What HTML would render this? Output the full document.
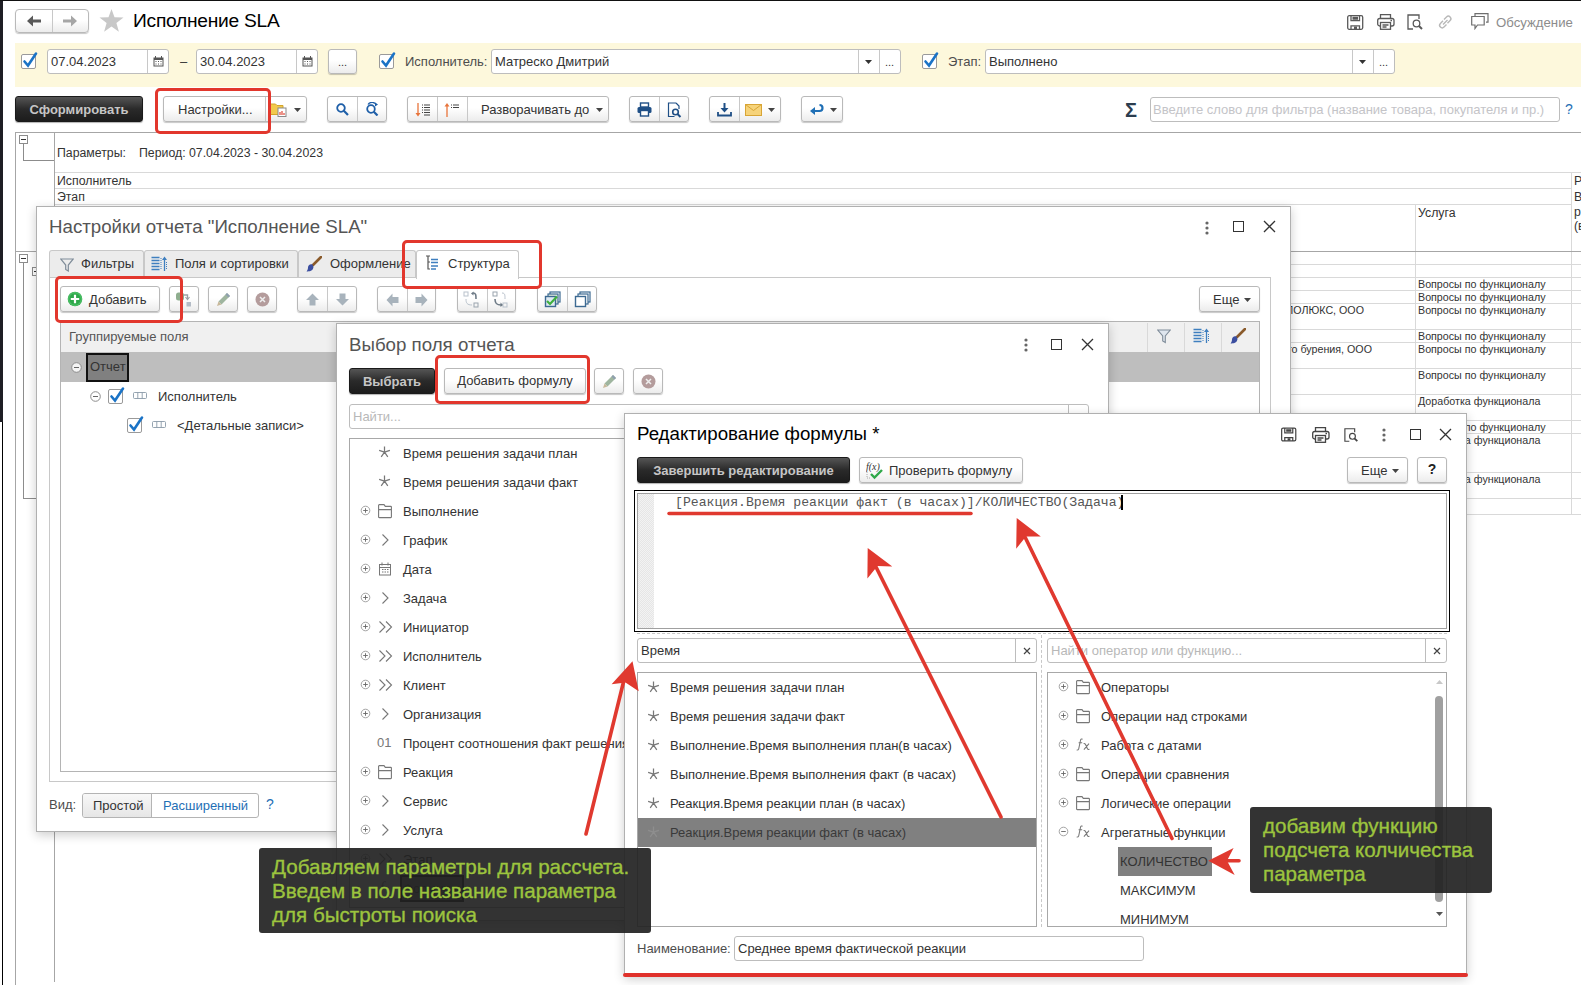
<!DOCTYPE html>
<html><head><meta charset="utf-8">
<style>
*{box-sizing:border-box;margin:0;padding:0}
html,body{width:1581px;height:985px;overflow:hidden;background:#fff;position:relative;font-family:"Liberation Sans",sans-serif;font-size:13px;color:#333}
.a{position:absolute}
.t{position:absolute;white-space:nowrap;line-height:16px;font-size:13px;color:#333}
.hl{position:absolute;height:1px;background:#d9d9d9}
.vl{position:absolute;width:1px;background:#d9d9d9}
.btn{position:absolute;border:1px solid #b9b9b9;border-radius:3px;background:linear-gradient(#fff,#fff 45%,#ececec);box-shadow:0 1px 1px rgba(0,0,0,.22);color:#333;white-space:nowrap;line-height:23px;text-align:center}
.dbtn{position:absolute;border:1px solid #1a1a1a;border-radius:3px;background:linear-gradient(#555,#2a2a2a 50%,#1c1c1c);color:#c6c6c6;font-weight:bold;white-space:nowrap;text-align:center;line-height:25px;box-shadow:0 1px 1px rgba(0,0,0,.3)}
.fld{position:absolute;border:1px solid #bdbdbd;border-radius:3px;background:#fff;white-space:nowrap;line-height:23px;padding-left:3px;color:#333}
.dv{position:absolute;top:0;bottom:0;width:1px;background:#c8c8c8}
.cb{position:absolute;width:15px;height:15px;border:1px solid #9a9a9a;border-radius:2px;background:#fff}
.cb svg{position:absolute;left:0;top:-4px}
.win{position:absolute;background:#fff;box-shadow:inset 0 0 0 1px #b0b0b0,0 3px 10px rgba(0,0,0,.2)}
.red{position:absolute;border:3px solid #e2372d;border-radius:5px}
.ico{position:absolute}
</style></head><body>
<!-- left dark strip -->
<div class="a" style="left:0;top:0;width:3px;height:422px;background:#1e1e24"></div>
<div class="a" style="left:2px;top:422px;width:1px;height:563px;background:#000"></div>
<div class="a" style="left:0;top:0;width:1581px;height:1px;background:#111"></div>

<!-- HEADER -->
<div class="btn" style="left:15px;top:9px;width:74px;height:24px;border-radius:4px"><div class="dv" style="left:36px"></div>
 <svg class="ico" style="left:11px;top:5px" width="14" height="12" viewBox="0 0 14 12"><path d="M0 6 L6 0.5 V4.5 H14 V7.5 H6 V11.5 Z" fill="#595959"/></svg>
 <svg class="ico" style="left:47px;top:5px" width="14" height="12" viewBox="0 0 14 12"><path d="M14 6 L8 0.5 V4.5 H0 V7.5 H8 V11.5 Z" fill="#a6a6a6"/></svg>
</div>
<svg class="ico" style="left:99px;top:9px" width="25" height="23" viewBox="0 0 24 23"><path d="M12 0 L15 8.3 L24 8.6 L16.9 14 L19.4 22.7 L12 17.6 L4.6 22.7 L7.1 14 L0 8.6 L9 8.3 Z" fill="#c8c8c8"/></svg>
<div class="t" style="left:133px;top:10px;font-size:19.2px;line-height:22px;color:#000;letter-spacing:-0.25px">Исполнение SLA</div>

<!-- header right icons -->
<svg class="ico" style="left:1347px;top:15px" width="17" height="15" viewBox="0 0 17 15" fill="none" stroke="#595959" stroke-width="1.3"><rect x="0.7" y="0.7" width="15" height="13.6" rx="1.5"/><path d="M4 0.7v5h8.5v-5M5.5 2.5h5.5M5.5 4h5.5M4 14.3v-3.5h8.5v3.5"/><rect x="7" y="11.5" width="3" height="2.5" fill="#595959" stroke="none"/></svg>
<svg class="ico" style="left:1377px;top:14px" width="18" height="16" viewBox="0 0 18 16" fill="none" stroke="#595959" stroke-width="1.3"><path d="M3.5 4.5V0.7h10v3.8"/><rect x="0.7" y="4.5" width="16.3" height="7.5" rx="2"/><rect x="3.5" y="8.5" width="10" height="6.8" fill="#fff"/><path d="M5.5 11h6M5.5 13h4M13.5 6.5h1.5"/></svg>
<svg class="ico" style="left:1407px;top:14px" width="18" height="16" viewBox="0 0 18 16" fill="none" stroke="#595959" stroke-width="1.3"><path d="M6 15H1V1h11v4"/><circle cx="9.5" cy="9.5" r="3.3"/><path d="M12 12l3 3" stroke-width="2"/></svg>
<svg class="ico" style="left:1437px;top:14px" width="17" height="16" viewBox="0 0 17 16" fill="none" stroke="#b8b8b8" stroke-width="1.4"><path d="M7 5.5l2.5-2.5a2.5 2.5 0 0 1 3.6 3.6L10.5 9.2M9.5 10.5L7 13a2.5 2.5 0 0 1-3.6-3.6L6 6.8M6 10.5l4.5-4.5"/></svg>
<svg class="ico" style="left:1471px;top:13px" width="18" height="17" viewBox="0 0 18 17" fill="none" stroke="#6e6e6e" stroke-width="1.2"><path d="M4 3V0.7h13v8.5h-2"/><path d="M0.7 3.5h12.5v8.5H6.5L4 15.5V12H0.7Z" fill="#fff"/></svg>
<div class="t" style="left:1496px;top:15px;color:#8c8c8c;font-size:13.2px">Обсуждение</div>

<!-- FILTER BAR -->
<div class="a" style="left:15px;top:43px;width:1566px;height:44px;background:#fdf8dc"></div>
<div class="cb" style="left:21px;top:54px"><svg width="16" height="18" viewBox="0 0 16 18"><path d="M2.5 10.5 L6 14.5 L14 2.5" fill="none" stroke="#1a73c6" stroke-width="2.6" stroke-linecap="round"/></svg></div>
<div class="fld" style="left:47px;top:49px;width:122px;height:25px">07.04.2023<div class="dv" style="left:99px;background:#c8c8c8"></div>
 <svg class="ico" style="left:105px;top:6px" width="11" height="11" viewBox="0 0 11 11"><rect x="0.5" y="1.5" width="10" height="9" fill="#555"/><rect x="1.5" y="4" width="8" height="5.5" fill="#fff"/><path d="M2.5 5h1v1h-1zM5 5h1v1H5zM7.5 5h1v1h-1zM2.5 7.5h1v1h-1zM5 7.5h1v1H5zM7.5 7.5h1v1h-1z" fill="#555"/><path d="M2.5 0v2M8.5 0v2" stroke="#555"/></svg>
</div>
<div class="t" style="left:180px;top:54px">–</div>
<div class="fld" style="left:196px;top:49px;width:122px;height:25px">30.04.2023<div class="dv" style="left:99px;background:#c8c8c8"></div>
 <svg class="ico" style="left:105px;top:6px" width="11" height="11" viewBox="0 0 11 11"><rect x="0.5" y="1.5" width="10" height="9" fill="#555"/><rect x="1.5" y="4" width="8" height="5.5" fill="#fff"/><path d="M2.5 5h1v1h-1zM5 5h1v1H5zM7.5 5h1v1h-1zM2.5 7.5h1v1h-1zM5 7.5h1v1H5zM7.5 7.5h1v1h-1z" fill="#555"/><path d="M2.5 0v2M8.5 0v2" stroke="#555"/></svg>
</div>
<div class="btn" style="left:328px;top:49px;width:29px;height:25px;line-height:24px;font-size:11px">...</div>

<div class="cb" style="left:379px;top:54px"><svg width="16" height="18" viewBox="0 0 16 18"><path d="M2.5 10.5 L6 14.5 L14 2.5" fill="none" stroke="#1a73c6" stroke-width="2.6" stroke-linecap="round"/></svg></div>
<div class="t" style="left:405px;top:54px;color:#4d4d4d">Исполнитель:</div>
<div class="fld" style="left:491px;top:49px;width:410px;height:25px">Матреско Дмитрий<div class="dv" style="left:366px"></div><div class="dv" style="left:387px"></div>
 <svg class="ico" style="left:373px;top:10px" width="7" height="4"><path d="M0 0h7L3.5 4z" fill="#333"/></svg>
 <div class="a" style="left:393px;top:0;font-size:11px;line-height:24px">...</div>
</div>
<div class="cb" style="left:922px;top:54px"><svg width="16" height="18" viewBox="0 0 16 18"><path d="M2.5 10.5 L6 14.5 L14 2.5" fill="none" stroke="#1a73c6" stroke-width="2.6" stroke-linecap="round"/></svg></div>
<div class="t" style="left:948px;top:54px;color:#4d4d4d">Этап:</div>
<div class="fld" style="left:985px;top:49px;width:410px;height:25px">Выполнено<div class="dv" style="left:366px"></div><div class="dv" style="left:387px"></div>
 <svg class="ico" style="left:373px;top:10px" width="7" height="4"><path d="M0 0h7L3.5 4z" fill="#333"/></svg>
 <div class="a" style="left:393px;top:0;font-size:11px;line-height:24px">...</div>
</div>

<!-- TOOLBAR -->
<div class="dbtn" style="left:15px;top:96px;width:128px;height:26px">Сформировать</div>
<div class="btn" style="left:163px;top:96px;width:144px;height:26px;text-align:left"><span class="a" style="left:14px;top:1px">Настройки...</span><div class="dv" style="left:101px"></div>
 <svg class="ico" style="left:106px;top:5px" width="18" height="15" viewBox="0 0 18 15"><path d="M0.5 2h5l1.5 1.5h6v9H0.5z" fill="#f2c94c" stroke="#d4a52a"/><rect x="8" y="6" width="8" height="8.5" fill="#fff" stroke="#8a8a8a"/><path d="M10 13V10M12 13V9M14 13v-2" stroke="#e04a3a" stroke-width="1.2"/></svg>
 <svg class="ico" style="left:130px;top:11px" width="7" height="4"><path d="M0 0h7L3.5 4z" fill="#444"/></svg>
</div>
<div class="btn" style="left:327px;top:96px;width:60px;height:26px"><div class="dv" style="left:29px"></div>
 <svg class="ico" style="left:8px;top:6px" width="13" height="13" viewBox="0 0 13 13"><circle cx="5" cy="5" r="3.8" fill="none" stroke="#1f5fa8" stroke-width="1.8"/><path d="M7.8 7.8L12 12" stroke="#1f5fa8" stroke-width="2.2"/></svg>
 <svg class="ico" style="left:37px;top:5px" width="15" height="14" viewBox="0 0 15 14"><circle cx="6" cy="7" r="3.8" fill="none" stroke="#1f5fa8" stroke-width="1.8"/><path d="M8.8 9.8L12.5 13.5" stroke="#1f5fa8" stroke-width="2.2"/><path d="M3 2.5A5 5 0 0 1 11.5 3" fill="none" stroke="#1f5fa8" stroke-width="1.3"/><path d="M10 0.5l3 2-3 2z" fill="#1f5fa8"/></svg>
</div>
<div class="btn" style="left:407px;top:96px;width:202px;height:26px;text-align:left"><div class="dv" style="left:29px"></div><div class="dv" style="left:59px"></div>
 <svg class="ico" style="left:7px;top:5px" width="16" height="16" viewBox="0 0 16 16"><path d="M3 1v12" stroke="#e8743b" stroke-width="1.3"/><path d="M0.5 11l2.5 3.5 2.5-3.5z" fill="#e8743b"/><path d="M7 3h1M9 3h6M7 5.5h1M9 5.5h6M7 8h1M9 8h6M7 10.5h1M9 10.5h6M9 13h6" stroke="#444" stroke-width="1.1"/></svg>
 <svg class="ico" style="left:36px;top:5px" width="16" height="16" viewBox="0 0 16 16"><path d="M3 3v12" stroke="#e8743b" stroke-width="1.3"/><path d="M0.5 4.5L3 1l2.5 3.5z" fill="#e8743b"/><path d="M7 3h1M9 3h6M7 5.5h1M9 5.5h6" stroke="#444" stroke-width="1.1"/></svg>
 <span class="a" style="left:73px;top:1px">Разворачивать до</span>
 <svg class="ico" style="left:188px;top:11px" width="7" height="4"><path d="M0 0h7L3.5 4z" fill="#444"/></svg>
</div>
<div class="btn" style="left:629px;top:96px;width:60px;height:26px"><div class="dv" style="left:29px"></div>
 <svg class="ico" style="left:7px;top:5px" width="15" height="15" viewBox="0 0 15 15"><rect x="3.5" y="1" width="8" height="4" fill="none" stroke="#1f4f86" stroke-width="1.4"/><rect x="0.5" y="5" width="14" height="6" rx="1.5" fill="#1f4f86"/><rect x="3.5" y="8.5" width="8" height="5.5" fill="#fff" stroke="#1f4f86" stroke-width="1.4"/></svg>
 <svg class="ico" style="left:37px;top:5px" width="15" height="16" viewBox="0 0 15 16"><path d="M9 1H1.5v13.5h6M9 1l3 3v3" fill="none" stroke="#1f4f86" stroke-width="1.2"/><circle cx="8.5" cy="10" r="2.8" fill="none" stroke="#1f4f86" stroke-width="1.6"/><path d="M10.5 12l3 3" stroke="#1f4f86" stroke-width="2"/></svg>
</div>
<div class="btn" style="left:709px;top:96px;width:72px;height:26px"><div class="dv" style="left:29px"></div>
 <svg class="ico" style="left:7px;top:5px" width="15" height="15" viewBox="0 0 15 15"><path d="M7.5 1v8" stroke="#1f4f86" stroke-width="2"/><path d="M3.5 6l4 4.5 4-4.5z" fill="#1f4f86"/><path d="M1 10v3.5h13V10" fill="none" stroke="#1f4f86" stroke-width="1.8"/></svg>
 <svg class="ico" style="left:35px;top:7px" width="17" height="12" viewBox="0 0 17 12"><rect x="0.5" y="0.5" width="16" height="11" fill="#f6d37a" stroke="#d8a536"/><path d="M0.5 0.5l8 6 8-6" fill="none" stroke="#d8a536"/></svg>
 <svg class="ico" style="left:58px;top:11px" width="7" height="4"><path d="M0 0h7L3.5 4z" fill="#444"/></svg>
</div>
<div class="btn" style="left:801px;top:96px;width:42px;height:26px">
 <svg class="ico" style="left:8px;top:6px" width="14" height="12" viewBox="0 0 14 12"><path d="M4.5 5h5a3 3 0 0 0 0-6" fill="none" stroke="#1f6fb5" stroke-width="2.2" transform="translate(0,3)"/><path d="M0 8l5-4v8z" fill="#1f6fb5"/></svg>
 <svg class="ico" style="left:28px;top:11px" width="7" height="4"><path d="M0 0h7L3.5 4z" fill="#444"/></svg>
</div>
<div class="t" style="left:1125px;top:99px;font-size:20px;line-height:22px;color:#2b3d4f;font-weight:bold">Σ</div>
<div class="fld" style="left:1150px;top:97px;width:410px;height:25px;color:#c4c4c8;padding-left:2px;line-height:23px">Введите слово для фильтра (название товара, покупателя и пр.)</div>
<div class="t" style="left:1565px;top:101px;color:#1f6fb5;font-size:14px">?</div>

<!--REPORT-->
<!-- REPORT BACKGROUND -->
<div class="a" style="left:15px;top:132px;width:1566px;height:1px;background:#a6a6a6"></div>
<div class="a" style="left:15px;top:132px;width:1px;height:853px;background:#a6a6a6"></div>
<div class="a" style="left:54px;top:133px;width:1px;height:849px;background:#a6a6a6"></div>
<div class="a" style="left:19px;top:135px;width:9px;height:9px;border:1px solid #8c8c8c;background:#fff"><div class="a" style="left:1px;top:3px;width:5px;height:1px;background:#333"></div></div>
<div class="a" style="left:23px;top:144px;width:1px;height:16px;background:#8c8c8c"></div>
<div class="a" style="left:23px;top:160px;width:31px;height:1px;background:#8c8c8c"></div>
<div class="a" style="left:15px;top:251px;width:21px;height:1px;background:#8c8c8c"></div>
<div class="a" style="left:19px;top:254px;width:9px;height:9px;border:1px solid #8c8c8c;background:#fff"><div class="a" style="left:1px;top:3px;width:5px;height:1px;background:#333"></div></div>
<div class="a" style="left:23px;top:263px;width:1px;height:236px;background:#8c8c8c"></div>
<div class="a" style="left:23px;top:498px;width:13px;height:1px;background:#8c8c8c"></div>
<div class="a" style="left:32px;top:267px;width:9px;height:9px;border:1px solid #8c8c8c;background:#fff"><div class="a" style="left:1px;top:3px;width:5px;height:1px;background:#333"></div></div>
<div class="t" style="left:57px;top:145px;font-size:12.3px">Параметры:</div>
<div class="t" style="left:139px;top:145px;font-size:12.3px">Период: 07.04.2023 - 30.04.2023</div>
<div class="hl" style="left:55px;top:172px;width:1526px"></div>
<div class="t" style="left:57px;top:173px;font-size:12.3px">Исполнитель</div>
<div class="hl" style="left:55px;top:188px;width:1516px"></div>
<div class="t" style="left:57px;top:189px;font-size:12.3px">Этап</div>
<div class="hl" style="left:55px;top:204px;width:1516px"></div>
<div class="vl" style="left:1571px;top:172px;height:343px"></div>
<div class="vl" style="left:1415px;top:204px;height:311px"></div>
<div class="t" style="left:1418px;top:205px;font-size:12.3px">Услуга</div>
<div class="t" style="left:1574px;top:173px;font-size:12.3px">Р</div>
<div class="t" style="left:1574px;top:189px;font-size:12.3px">В</div>
<div class="t" style="left:1574px;top:204px;font-size:12.3px">р</div>
<div class="t" style="left:1574px;top:218px;font-size:12.3px">(в</div>
<div class="a" style="left:15px;top:251px;width:1566px;height:1px;background:#a6a6a6"></div>
<div class="hl" style="left:1290px;top:264px;width:291px"></div>
<div class="hl" style="left:1290px;top:277px;width:291px"></div>
<div class="hl" style="left:1290px;top:290px;width:291px"></div>
<div class="hl" style="left:1290px;top:303px;width:291px"></div>
<div class="hl" style="left:1290px;top:329px;width:291px"></div>
<div class="hl" style="left:1290px;top:342px;width:291px"></div>
<div class="hl" style="left:1290px;top:368px;width:291px"></div>
<div class="hl" style="left:1290px;top:394px;width:291px"></div>
<div class="hl" style="left:1290px;top:420px;width:291px"></div>
<div class="hl" style="left:1290px;top:433px;width:291px"></div>
<div class="hl" style="left:1290px;top:472px;width:291px"></div>
<div class="hl" style="left:1290px;top:498px;width:291px"></div>
<div class="hl" style="left:1290px;top:514px;width:291px"></div>
<div class="t" style="left:1418px;top:277px;font-size:10.7px;line-height:14px">Вопросы по функционалу</div>
<div class="t" style="left:1418px;top:290px;font-size:10.7px;line-height:14px">Вопросы по функционалу</div>
<div class="t" style="left:1418px;top:303px;font-size:10.7px;line-height:14px">Вопросы по функционалу</div>
<div class="t" style="right:217px;top:303px;font-size:10.7px;line-height:14px">АПОЛЮКС, ООО</div>
<div class="t" style="left:1418px;top:329px;font-size:10.7px;line-height:14px">Вопросы по функционалу</div>
<div class="t" style="left:1418px;top:342px;font-size:10.7px;line-height:14px">Вопросы по функционалу</div>
<div class="t" style="right:209px;top:342px;font-size:10.7px;line-height:14px">ного бурения, ООО</div>
<div class="t" style="left:1418px;top:368px;font-size:10.7px;line-height:14px">Вопросы по функционалу</div>
<div class="t" style="left:1418px;top:394px;font-size:10.7px;line-height:14px">Доработка функционала</div>
<div class="t" style="left:1418px;top:420px;font-size:10.7px;line-height:14px">Вопросы по функционалу</div>
<div class="t" style="left:1418px;top:433px;font-size:10.7px;line-height:14px">Доработка функционала</div>
<div class="t" style="left:1418px;top:472px;font-size:10.7px;line-height:14px">Доработка функционала</div>

<!-- SETTINGS DIALOG -->
<div class="win" style="left:36px;top:206px;width:1255px;height:626px">
 <div class="t" style="left:13px;top:10px;font-size:18.7px;line-height:22px;color:#555">Настройки отчета "Исполнение SLA"</div>
 <svg class="ico" style="left:1169px;top:15px" width="4" height="14"><circle cx="2" cy="2" r="1.6" fill="#666"/><circle cx="2" cy="7" r="1.6" fill="#666"/><circle cx="2" cy="12" r="1.6" fill="#666"/></svg>
 <div class="a" style="left:1197px;top:15px;width:11px;height:11px;border:1.3px solid #333"></div>
 <svg class="ico" style="left:1227px;top:14px" width="13" height="13"><path d="M1 1L12 12M12 1L1 12" stroke="#333" stroke-width="1.3"/></svg>
 <!-- tabs: dialog origin (36,206) -->
 <div class="a" style="left:13px;top:44px;width:95px;height:28px;background:#ececec;border:1px solid #c8c8c8;border-bottom:none;border-radius:3px 3px 0 0"></div>
 <svg class="ico" style="left:24px;top:52px" width="14" height="14" viewBox="0 0 14 14"><path d="M0.7 1h12.6L8.3 7v6L5.7 11.5V7z" fill="none" stroke="#7f8c99" stroke-width="1.2"/></svg>
 <div class="t" style="left:45px;top:50px;color:#333">Фильтры</div>
 <div class="a" style="left:108px;top:44px;width:154px;height:28px;background:#ececec;border:1px solid #c8c8c8;border-bottom:none;border-radius:3px 3px 0 0"></div>
 <svg class="ico" style="left:115px;top:50px" width="17" height="16" viewBox="0 0 17 16"><path d="M0.5 1.5h8M0.5 4.5h8M0.5 7.5h8M0.5 10.5h8M0.5 13.5h8" stroke="#3f7fbf" stroke-width="1.6"/><path d="M13.5 15V2" stroke="#3f7fbf" stroke-width="1.3"/><path d="M11 4l2.5-3.5L16 4z" fill="#3f7fbf"/><path d="M10 2v12" stroke="#3f7fbf" stroke-width="1" stroke-dasharray="1 1"/><path d="M15.5 6v8" stroke="#3f7fbf" stroke-width="1" stroke-dasharray="1 1"/></svg>
 <div class="t" style="left:139px;top:50px;color:#333">Поля и сортировки</div>
 <div class="a" style="left:262px;top:44px;width:118px;height:28px;background:#ececec;border:1px solid #c8c8c8;border-bottom:none;border-radius:3px 3px 0 0"></div>
 <svg class="ico" style="left:270px;top:50px" width="16" height="16" viewBox="0 0 16 16"><path d="M15 1L7 9" stroke="#8a5a2b" stroke-width="2.6" stroke-linecap="round"/><path d="M6.5 8.5c-2.5-1-4.5 1-4.5 3S1 15 0.5 15.5c3 0 6.5-0.5 7-4.5z" fill="#3b4ea0"/></svg>
 <div class="t" style="left:294px;top:50px;color:#333">Оформление</div>
 <div class="a" style="left:380px;top:44px;width:103px;height:29px;background:#fff;border:1px solid #c8c8c8;border-bottom:none;border-radius:3px 3px 0 0"></div>
 <svg class="ico" style="left:389px;top:49px" width="14" height="16" viewBox="0 0 14 16"><path d="M1 1h4M3 1v13h2M3 7h2" fill="none" stroke="#555" stroke-width="1.2"/><path d="M6 4.5h7M6 7.5h7M6 11h7M6 14h5" stroke="#3f7fbf" stroke-width="1.6"/></svg>
 <div class="t" style="left:412px;top:50px;color:#333">Структура</div>
 <!-- tab panel -->
 <div class="a" style="left:13px;top:71px;width:1222px;height:505px;border:1px solid #c8c8c8;border-top:none"></div>
 <div class="a" style="left:13px;top:71px;width:367px;height:1px;background:#c8c8c8"></div>
 <div class="a" style="left:483px;top:71px;width:752px;height:1px;background:#c8c8c8"></div>
 <!-- toolbar y 286-312 => 80-106 -->
 <div class="btn" style="left:24px;top:80px;width:100px;height:26px;text-align:left;line-height:23px">
  <svg class="ico" style="left:6px;top:4px" width="16" height="16" viewBox="0 0 16 16"><circle cx="8" cy="8" r="7.3" fill="#2ea84a"/><circle cx="8" cy="8" r="6.3" fill="none" stroke="#5fd07a" stroke-width="0.8"/><path d="M8 3.8v8.4M3.8 8h8.4" stroke="#fff" stroke-width="2.2"/></svg>
  <span class="a" style="left:28px;top:1px">Добавить</span></div>
 <div class="btn" style="left:133px;top:80px;width:30px;height:26px">
  <svg class="ico" style="left:5px;top:4px" width="18" height="18" viewBox="0 0 18 18"><rect x="1" y="1.5" width="8" height="8" rx="2.5" fill="#8fae8f"/><path d="M9 4h3.5v4" fill="none" stroke="#9aa0a6" stroke-width="1.4"/><path d="M10.5 6l2 2.5 2-2.5" fill="none" stroke="#9aa0a6" stroke-width="1.2"/><rect x="11.5" y="11" width="4.5" height="4.5" fill="#b4bcc6"/></svg></div>
 <div class="btn" style="left:172px;top:80px;width:30px;height:26px">
  <svg class="ico" style="left:7px;top:5px" width="15" height="15" viewBox="0 0 15 15"><path d="M11 1l3 3-8.5 8.5-3-3z" fill="#9fb59f"/><path d="M11 1l3 3-1.5 1.5-3-3z" fill="#8f9fb0"/><path d="M2.5 9.5l3 3L1 14z" fill="#c8b89a"/></svg></div>
 <div class="btn" style="left:211px;top:80px;width:30px;height:26px">
  <svg class="ico" style="left:7px;top:5px" width="15" height="15" viewBox="0 0 15 15"><circle cx="7.5" cy="7.5" r="7" fill="#b49c9c"/><path d="M5 5l5 5M10 5l-5 5" stroke="#eee" stroke-width="1.5"/></svg></div>
 <div class="btn" style="left:261px;top:80px;width:60px;height:26px"><div class="dv" style="left:29px"></div>
  <svg class="ico" style="left:7px;top:6px" width="15" height="13" viewBox="0 0 15 13"><path d="M7.5 0.5L14 7h-3.5v5.5h-6V7H1z" fill="#a8b3bc"/></svg>
  <svg class="ico" style="left:37px;top:6px" width="15" height="13" viewBox="0 0 15 13"><path d="M7.5 12.5L14 6h-3.5V0.5h-6V6H1z" fill="#a8b3bc"/></svg></div>
 <div class="btn" style="left:341px;top:80px;width:59px;height:26px"><div class="dv" style="left:29px"></div>
  <svg class="ico" style="left:8px;top:6px" width="13" height="14" viewBox="0 0 13 14"><path d="M0.5 7L6.5 0.5V4H12.5V10H6.5V13.5z" fill="#a8b3bc"/></svg>
  <svg class="ico" style="left:37px;top:6px" width="13" height="14" viewBox="0 0 13 14"><path d="M12.5 7L6.5 0.5V4H0.5V10H6.5V13.5z" fill="#a8b3bc"/></svg></div>
 <div class="btn" style="left:421px;top:80px;width:59px;height:26px"><div class="dv" style="left:29px"></div>
  <svg class="ico" style="left:5px;top:4px" width="18" height="18" viewBox="0 0 18 18" fill="none" stroke="#b9c2cc" stroke-width="1"><rect x="1" y="1" width="4" height="4"/><rect x="11" y="12" width="4" height="4" stroke="#9aa4ae"/><path d="M10 2c3 0 3 2 3 6" stroke="#6d7a86" stroke-width="1.6"/><path d="M8 2.5l2.5-2v4z" fill="#6d7a86" stroke="none"/><path d="M3 8c0 4 1 6 6 6"/></svg>
  <svg class="ico" style="left:34px;top:4px" width="18" height="18" viewBox="0 0 18 18" fill="none" stroke="#b9c2cc" stroke-width="1"><rect x="1" y="1" width="4" height="4" stroke="#9aa4ae"/><rect x="11" y="12" width="4" height="4"/><path d="M10 2c3 0 3 2 3 6"/><path d="M3 8c0 4 1 6 6 6" stroke="#6d7a86" stroke-width="1.6"/><path d="M8.5 11.5l2.5 2.5-2.5 2z" fill="#6d7a86" stroke="none"/></svg></div>
 <div class="btn" style="left:501px;top:80px;width:60px;height:26px"><div class="dv" style="left:29px"></div>
  <svg class="ico" style="left:6px;top:4px" width="18" height="18" viewBox="0 0 18 18"><rect x="6" y="1" width="10" height="10" fill="#fff" stroke="#3d6a92" stroke-width="1.2"/><rect x="4" y="3" width="10" height="10" fill="#e8f0e0" stroke="#3d6a92" stroke-width="1.2"/><rect x="1.5" y="5.5" width="10" height="10" fill="#dfeaf2" stroke="#3d6a92" stroke-width="1.4"/><path d="M3 10l3 3 7-7.5" fill="none" stroke="#3fb03f" stroke-width="2.2"/></svg>
  <svg class="ico" style="left:36px;top:4px" width="18" height="18" viewBox="0 0 18 18" fill="#fff" stroke="#3d6a92" stroke-width="1.2"><rect x="6" y="1" width="10" height="10"/><rect x="4" y="3" width="10" height="10"/><rect x="1.5" y="5.5" width="10" height="10" stroke-width="1.4"/></svg></div>
 <div class="btn" style="left:1163px;top:80px;width:61px;height:26px;text-align:left"><span class="a" style="left:13px;top:1px">Еще</span><svg class="ico" style="left:44px;top:11px" width="7" height="4"><path d="M0 0h7L3.5 4z" fill="#444"/></svg></div>
 <!-- table x60-1260 y322-772 => 24..1224, 116..566 -->
 <div class="a" style="left:24px;top:115px;width:1200px;height:451px;border:1px solid #b4b4b4;background:#fff"></div>
 <div class="a" style="left:25px;top:116px;width:1198px;height:30px;background:#f0f0f0"></div>
 <div class="vl" style="left:848px;top:117px;height:29px"></div>
 <div class="vl" style="left:1111px;top:117px;height:29px"></div>
 <div class="vl" style="left:1148px;top:117px;height:29px"></div>
 <div class="vl" style="left:1185px;top:117px;height:29px"></div>
 <svg class="ico" style="left:1121px;top:123px" width="14" height="15" viewBox="0 0 14 15"><path d="M0.7 1h12.6L8.3 7v6.5L5.7 12V7z" fill="#dfe6ee" stroke="#7f8c99" stroke-width="1.1"/></svg>
 <svg class="ico" style="left:1157px;top:122px" width="17" height="16" viewBox="0 0 17 16"><path d="M0.5 1.5h8M0.5 4.5h8M0.5 7.5h8M0.5 10.5h8M0.5 13.5h8" stroke="#3f7fbf" stroke-width="1.6"/><path d="M13.5 15V2" stroke="#3f7fbf" stroke-width="1.3"/><path d="M11 4l2.5-3.5L16 4z" fill="#3f7fbf"/><path d="M10 2v12" stroke="#3f7fbf" stroke-width="1" stroke-dasharray="1 1"/><path d="M15.5 6v8" stroke="#3f7fbf" stroke-width="1" stroke-dasharray="1 1"/></svg>
 <svg class="ico" style="left:1194px;top:122px" width="16" height="16" viewBox="0 0 16 16"><path d="M15 1L7 9" stroke="#8a5a2b" stroke-width="2.6" stroke-linecap="round"/><path d="M6.5 8.5c-2.5-1-4.5 1-4.5 3S1 15 0.5 15.5c3 0 6.5-0.5 7-4.5z" fill="#3b4ea0"/></svg>
 <div class="t" style="left:33px;top:123px;color:#555">Группируемые поля</div>
 <div class="a" style="left:25px;top:146px;width:1198px;height:30px;background:#bebebe"></div>
 <svg class="ico" style="left:35px;top:156px" width="11" height="11"><circle cx="5.5" cy="5.5" r="4.8" fill="#f4f4f4" stroke="#8c8c8c"/><path d="M3 5.5h5" stroke="#666"/></svg>
 <div class="a" style="left:50px;top:147px;width:43px;height:29px;border:2px solid #111;background:#808080"></div>
 <div class="t" style="left:54px;top:153px;color:#333">Отчет</div>
 <svg class="ico" style="left:54px;top:185px" width="11" height="11"><circle cx="5.5" cy="5.5" r="4.8" fill="#fff" stroke="#8c8c8c"/><path d="M3 5.5h5" stroke="#666"/></svg>
 <div class="cb" style="left:72px;top:183px"><svg width="16" height="18" viewBox="0 0 16 18"><path d="M2.5 10.5 L6 14.5 L14 2.5" fill="none" stroke="#1a73c6" stroke-width="2.6" stroke-linecap="round"/></svg></div>
 <svg class="ico" style="left:97px;top:186px" width="14" height="7" viewBox="0 0 14 7" fill="none" stroke="#8a9aa8" stroke-width="0.9"><rect x="0.5" y="0.5" width="13" height="6" rx="1"/><path d="M4.8 0.5v6M9.2 0.5v6"/></svg>
 <div class="t" style="left:122px;top:183px;color:#333">Исполнитель</div>
 <div class="cb" style="left:91px;top:212px"><svg width="16" height="18" viewBox="0 0 16 18"><path d="M2.5 10.5 L6 14.5 L14 2.5" fill="none" stroke="#1a73c6" stroke-width="2.6" stroke-linecap="round"/></svg></div>
 <svg class="ico" style="left:116px;top:215px" width="14" height="7" viewBox="0 0 14 7" fill="none" stroke="#8a9aa8" stroke-width="0.9"><rect x="0.5" y="0.5" width="13" height="6" rx="1"/><path d="M4.8 0.5v6M9.2 0.5v6"/></svg>
 <div class="t" style="left:141px;top:212px;color:#333">&lt;Детальные записи&gt;</div>
 <!-- bottom Вид -->
 <div class="t" style="left:13px;top:591px;color:#4d4d4d">Вид:</div>
 <div class="a" style="left:46px;top:587px;width:177px;height:25px;border:1px solid #b4b4b4;border-radius:3px;background:#fff;overflow:hidden">
  <div class="a" style="left:0;top:0;width:69px;height:23px;background:linear-gradient(#f8f8f8,#e6e6e6);border-right:1px solid #b4b4b4"></div>
  <div class="t" style="left:10px;top:4px;color:#333">Простой</div>
  <div class="t" style="left:80px;top:4px;color:#1f6fb5">Расширенный</div>
 </div>
 <div class="t" style="left:230px;top:590px;color:#1f6fb5;font-size:14px">?</div>
</div>
<div class="red" style="left:155px;top:88px;width:116px;height:46px"></div>
<div class="red" style="left:55px;top:276px;width:128px;height:47px"></div>
<div class="red" style="left:402px;top:240px;width:140px;height:49px"></div>

<div class="win" style="left:336px;top:323px;width:773px;height:598px">
 <div class="t" style="left:13px;top:11px;font-size:18.7px;line-height:22px;color:#555">Выбор поля отчета</div>
 <svg class="ico" style="left:688px;top:15px" width="4" height="14"><circle cx="2" cy="2" r="1.6" fill="#666"/><circle cx="2" cy="7" r="1.6" fill="#666"/><circle cx="2" cy="12" r="1.6" fill="#666"/></svg>
 <div class="a" style="left:715px;top:16px;width:11px;height:11px;border:1.3px solid #333"></div>
 <svg class="ico" style="left:745px;top:15px" width="13" height="13"><path d="M1 1L12 12M12 1L1 12" stroke="#333" stroke-width="1.3"/></svg>
 <div class="dbtn" style="left:13px;top:45px;width:86px;height:26px">Выбрать</div>
 <div class="btn" style="left:108px;top:45px;width:142px;height:26px">Добавить формулу</div>
 <div class="btn" style="left:258px;top:45px;width:30px;height:26px"><svg class="ico" style="left:7px;top:5px" width="15" height="15" viewBox="0 0 15 15"><path d="M11 1l3 3-8.5 8.5-3-3z" fill="#9fb59f"/><path d="M11 1l3 3-1.5 1.5-3-3z" fill="#8f9fb0"/><path d="M2.5 9.5l3 3L1 14z" fill="#c8b89a"/></svg></div>
 <div class="btn" style="left:297px;top:45px;width:30px;height:26px"><svg class="ico" style="left:7px;top:5px" width="15" height="15" viewBox="0 0 15 15"><circle cx="7.5" cy="7.5" r="7" fill="#b49c9c"/><path d="M5 5l5 5M10 5l-5 5" stroke="#eee" stroke-width="1.5"/></svg></div>
 <div class="fld" style="left:13px;top:81px;width:740px;height:25px;color:#b8b8b8;line-height:23px;padding-left:3px">Найти...<div class="dv" style="left:718px;background:#bdbdbd"></div></div>
 <div class="a" style="left:13px;top:115px;width:740px;height:470px;border:1px solid #a8a8a8"></div>
 <svg class="ico" style="left:43px;top:123px" width="12" height="12" viewBox="0 0 12 12"><path d="M5.5 6.2V0.5M5.5 6.2L10.9 4.4M5.5 6.2L8.8 10.8M5.5 6.2L2.2 10.8M5.5 6.2L0.1 4.4" stroke="#777" stroke-width="1.25" fill="none"/></svg>
 <div class="t" style="left:67px;top:123px;color:#333">Время решения задачи план</div>
 <svg class="ico" style="left:43px;top:152px" width="12" height="12" viewBox="0 0 12 12"><path d="M5.5 6.2V0.5M5.5 6.2L10.9 4.4M5.5 6.2L8.8 10.8M5.5 6.2L2.2 10.8M5.5 6.2L0.1 4.4" stroke="#777" stroke-width="1.25" fill="none"/></svg>
 <div class="t" style="left:67px;top:152px;color:#333">Время решения задачи факт</div>
 <svg class="ico" style="left:24px;top:182px" width="11" height="11"><circle cx="5.5" cy="5.5" r="4.3" fill="#fff" stroke="#9a9a9a" stroke-width="0.9"/><path d="M3.2 5.5h4.6M5.5 3.2v4.6" stroke="#666" stroke-width="0.9"/></svg>
 <svg class="ico" style="left:42px;top:181px" width="15" height="15" viewBox="0 0 15 15" fill="none" stroke="#777" stroke-width="1.1"><path d="M0.6 13V1.3Q0.6 0.6 1.3 0.6H6L7.3 2.4H12.7Q13.4 2.4 13.4 3.1V13Q13.4 13.6 12.7 13.6H1.3Q0.6 13.6 0.6 13ZM0.6 5.6H13.4"/></svg>
 <div class="t" style="left:67px;top:181px;color:#333">Выполнение</div>
 <svg class="ico" style="left:24px;top:211px" width="11" height="11"><circle cx="5.5" cy="5.5" r="4.3" fill="#fff" stroke="#9a9a9a" stroke-width="0.9"/><path d="M3.2 5.5h4.6M5.5 3.2v4.6" stroke="#666" stroke-width="0.9"/></svg>
 <svg class="ico" style="left:42px;top:210px" width="14" height="14" viewBox="0 0 14 14"><path d="M4.5 1.5L10 7l-5.5 5.5" fill="none" stroke="#777" stroke-width="1.1"/></svg>
 <div class="t" style="left:67px;top:210px;color:#333">График</div>
 <svg class="ico" style="left:24px;top:240px" width="11" height="11"><circle cx="5.5" cy="5.5" r="4.3" fill="#fff" stroke="#9a9a9a" stroke-width="0.9"/><path d="M3.2 5.5h4.6M5.5 3.2v4.6" stroke="#666" stroke-width="0.9"/></svg>
 <svg class="ico" style="left:42px;top:239px" width="14" height="14" viewBox="0 0 14 14" fill="none" stroke="#777" stroke-width="1"><rect x="1.5" y="2.5" width="11" height="10.5"/><path d="M4 0.5v3M10 0.5v3M1.5 5.5h11"/><path d="M4 7.5h1.5M6.5 7.5h1.5M9 7.5h1.5M4 10h1.5M6.5 10h1.5M9 10h1.5" stroke-width="1.2"/></svg>
 <div class="t" style="left:67px;top:239px;color:#333">Дата</div>
 <svg class="ico" style="left:24px;top:269px" width="11" height="11"><circle cx="5.5" cy="5.5" r="4.3" fill="#fff" stroke="#9a9a9a" stroke-width="0.9"/><path d="M3.2 5.5h4.6M5.5 3.2v4.6" stroke="#666" stroke-width="0.9"/></svg>
 <svg class="ico" style="left:42px;top:268px" width="14" height="14" viewBox="0 0 14 14"><path d="M4.5 1.5L10 7l-5.5 5.5" fill="none" stroke="#777" stroke-width="1.1"/></svg>
 <div class="t" style="left:67px;top:268px;color:#333">Задача</div>
 <svg class="ico" style="left:24px;top:298px" width="11" height="11"><circle cx="5.5" cy="5.5" r="4.3" fill="#fff" stroke="#9a9a9a" stroke-width="0.9"/><path d="M3.2 5.5h4.6M5.5 3.2v4.6" stroke="#666" stroke-width="0.9"/></svg>
 <svg class="ico" style="left:42px;top:297px" width="16" height="14" viewBox="0 0 16 14"><path d="M1.5 1.5L7 7l-5.5 5.5M8 1.5L13.5 7 8 12.5" fill="none" stroke="#777" stroke-width="1.1"/></svg>
 <div class="t" style="left:67px;top:297px;color:#333">Инициатор</div>
 <svg class="ico" style="left:24px;top:327px" width="11" height="11"><circle cx="5.5" cy="5.5" r="4.3" fill="#fff" stroke="#9a9a9a" stroke-width="0.9"/><path d="M3.2 5.5h4.6M5.5 3.2v4.6" stroke="#666" stroke-width="0.9"/></svg>
 <svg class="ico" style="left:42px;top:326px" width="16" height="14" viewBox="0 0 16 14"><path d="M1.5 1.5L7 7l-5.5 5.5M8 1.5L13.5 7 8 12.5" fill="none" stroke="#777" stroke-width="1.1"/></svg>
 <div class="t" style="left:67px;top:326px;color:#333">Исполнитель</div>
 <svg class="ico" style="left:24px;top:356px" width="11" height="11"><circle cx="5.5" cy="5.5" r="4.3" fill="#fff" stroke="#9a9a9a" stroke-width="0.9"/><path d="M3.2 5.5h4.6M5.5 3.2v4.6" stroke="#666" stroke-width="0.9"/></svg>
 <svg class="ico" style="left:42px;top:355px" width="16" height="14" viewBox="0 0 16 14"><path d="M1.5 1.5L7 7l-5.5 5.5M8 1.5L13.5 7 8 12.5" fill="none" stroke="#777" stroke-width="1.1"/></svg>
 <div class="t" style="left:67px;top:355px;color:#333">Клиент</div>
 <svg class="ico" style="left:24px;top:385px" width="11" height="11"><circle cx="5.5" cy="5.5" r="4.3" fill="#fff" stroke="#9a9a9a" stroke-width="0.9"/><path d="M3.2 5.5h4.6M5.5 3.2v4.6" stroke="#666" stroke-width="0.9"/></svg>
 <svg class="ico" style="left:42px;top:384px" width="14" height="14" viewBox="0 0 14 14"><path d="M4.5 1.5L10 7l-5.5 5.5" fill="none" stroke="#777" stroke-width="1.1"/></svg>
 <div class="t" style="left:67px;top:384px;color:#333">Организация</div>
 <div class="t" style="left:41px;top:412px;color:#777">01</div>
 <div class="t" style="left:67px;top:413px;color:#333">Процент соотношения факт решения</div>
 <svg class="ico" style="left:24px;top:443px" width="11" height="11"><circle cx="5.5" cy="5.5" r="4.3" fill="#fff" stroke="#9a9a9a" stroke-width="0.9"/><path d="M3.2 5.5h4.6M5.5 3.2v4.6" stroke="#666" stroke-width="0.9"/></svg>
 <svg class="ico" style="left:42px;top:442px" width="15" height="15" viewBox="0 0 15 15" fill="none" stroke="#777" stroke-width="1.1"><path d="M0.6 13V1.3Q0.6 0.6 1.3 0.6H6L7.3 2.4H12.7Q13.4 2.4 13.4 3.1V13Q13.4 13.6 12.7 13.6H1.3Q0.6 13.6 0.6 13ZM0.6 5.6H13.4"/></svg>
 <div class="t" style="left:67px;top:442px;color:#333">Реакция</div>
 <svg class="ico" style="left:24px;top:472px" width="11" height="11"><circle cx="5.5" cy="5.5" r="4.3" fill="#fff" stroke="#9a9a9a" stroke-width="0.9"/><path d="M3.2 5.5h4.6M5.5 3.2v4.6" stroke="#666" stroke-width="0.9"/></svg>
 <svg class="ico" style="left:42px;top:471px" width="14" height="14" viewBox="0 0 14 14"><path d="M4.5 1.5L10 7l-5.5 5.5" fill="none" stroke="#777" stroke-width="1.1"/></svg>
 <div class="t" style="left:67px;top:471px;color:#333">Сервис</div>
 <svg class="ico" style="left:24px;top:501px" width="11" height="11"><circle cx="5.5" cy="5.5" r="4.3" fill="#fff" stroke="#9a9a9a" stroke-width="0.9"/><path d="M3.2 5.5h4.6M5.5 3.2v4.6" stroke="#666" stroke-width="0.9"/></svg>
 <svg class="ico" style="left:42px;top:500px" width="14" height="14" viewBox="0 0 14 14"><path d="M4.5 1.5L10 7l-5.5 5.5" fill="none" stroke="#777" stroke-width="1.1"/></svg>
 <div class="t" style="left:67px;top:500px;color:#333">Услуга</div>
 <svg class="ico" style="left:24px;top:530px" width="11" height="11"><circle cx="5.5" cy="5.5" r="4.3" fill="#fff" stroke="#9a9a9a" stroke-width="0.9"/><path d="M3.2 5.5h4.6M5.5 3.2v4.6" stroke="#666" stroke-width="0.9"/></svg>
 <svg class="ico" style="left:42px;top:529px" width="16" height="14" viewBox="0 0 16 14"><path d="M1.5 1.5L7 7l-5.5 5.5M8 1.5L13.5 7 8 12.5" fill="none" stroke="#777" stroke-width="1.1"/></svg>
 <div class="t" style="left:67px;top:529px;color:#333">Этап</div>
 <div class="a" style="left:64px;top:552px;width:64px;height:27px;border:2px solid #111;background:#808080"></div>
 <div class="t" style="left:44px;top:556px;color:#777;font-style:italic;font-family:'Liberation Serif',serif;font-size:15px">f</div>
 <div class="t" style="left:67px;top:558px;color:#333">Формула</div>
</div>
<div class="red" style="left:435px;top:355px;width:155px;height:49px"></div>
<div class="win" style="left:624px;top:413px;width:843px;height:563px">
 <div class="t" style="left:13px;top:10px;font-size:18.7px;line-height:22px;color:#000">Редактирование формулы *</div>
 <svg class="ico" style="left:657px;top:14px" width="16" height="15" viewBox="0 0 17 15" fill="none" stroke="#444" stroke-width="1.3"><rect x="0.7" y="0.7" width="15" height="13.6" rx="1.5"/><path d="M4 0.7v5h8.5v-5M5.5 2.5h5.5M5.5 4h5.5M4 14.3v-3.5h8.5v3.5"/><rect x="7" y="11.5" width="3" height="2.5" fill="#444" stroke="none"/></svg>
 <svg class="ico" style="left:688px;top:14px" width="18" height="16" viewBox="0 0 18 16" fill="none" stroke="#444" stroke-width="1.3"><path d="M3.5 4.5V0.7h10v3.8"/><rect x="0.7" y="4.5" width="16.3" height="7.5" rx="2"/><rect x="3.5" y="8.5" width="10" height="6.8" fill="#fff"/><path d="M5.5 11h6M5.5 13h4M13.5 6.5h1.5"/></svg>
 <svg class="ico" style="left:720px;top:14px" width="16" height="16" viewBox="0 0 18 16" fill="none" stroke="#444" stroke-width="1.3"><path d="M6 15H1V1h11v4"/><circle cx="9.5" cy="9.5" r="3.3"/><path d="M12 12l3 3" stroke-width="2"/></svg>
 <svg class="ico" style="left:758px;top:15px" width="4" height="14"><circle cx="2" cy="2" r="1.6" fill="#666"/><circle cx="2" cy="7" r="1.6" fill="#666"/><circle cx="2" cy="12" r="1.6" fill="#666"/></svg>
 <div class="a" style="left:786px;top:16px;width:11px;height:11px;border:1.3px solid #333"></div>
 <svg class="ico" style="left:815px;top:15px" width="13" height="13"><path d="M1 1L12 12M12 1L1 12" stroke="#333" stroke-width="1.3"/></svg>
 <div class="dbtn" style="left:13px;top:44px;width:213px;height:26px">Завершить редактирование</div>
 <div class="btn" style="left:235px;top:44px;width:164px;height:26px;text-align:left"><svg class="ico" style="left:6px;top:3px" width="18" height="19" viewBox="0 0 18 19"><text x="0" y="9" font-family="Liberation Serif" font-style="italic" font-size="10" fill="#333">f(x)</text><path d="M1 11v6h3" fill="none" stroke="#999" stroke-width="0.8" stroke-dasharray="1 1"/><path d="M5 13l3.5 3.5L16 9" fill="none" stroke="#2fa84a" stroke-width="2.4"/></svg><span class="a" style="left:29px;top:1px">Проверить формулу</span></div>
 <div class="btn" style="left:723px;top:44px;width:61px;height:26px;text-align:left"><span class="a" style="left:13px;top:1px">Еще</span><svg class="ico" style="left:44px;top:11px" width="7" height="4"><path d="M0 0h7L3.5 4z" fill="#444"/></svg></div>
 <div class="btn" style="left:793px;top:44px;width:30px;height:26px;font-weight:bold;font-size:14px;color:#222">?</div>
 <div class="a" style="left:10px;top:77px;width:816px;height:142px;border:1px solid #000;background:#fff"></div>
 <div class="a" style="left:13px;top:80px;width:810px;height:136px;border:1px solid #a0a0a0"></div>
 <div class="a" style="left:14px;top:81px;width:16px;height:134px;background-color:#f3f3f3;background-image:linear-gradient(45deg,#e6e6e6 25%,transparent 25%,transparent 75%,#e6e6e6 75%),linear-gradient(45deg,#e6e6e6 25%,transparent 25%,transparent 75%,#e6e6e6 75%);background-size:2px 2px;background-position:0 0,1px 1px"></div>
 <div class="t" style="left:51px;top:82px;font-family:'Liberation Mono',monospace;font-size:13.15px;line-height:16px;color:#555">[Реакция.Время реакции факт (в часах)]/КОЛИЧЕСТВО(Задача)</div>
 <div class="a" style="left:497px;top:82px;width:2px;height:15px;background:#000"></div>
 <div class="a" style="left:13px;top:220px;width:810px;height:0;border-top:1px dashed #c8c8c8"></div>
 <div class="a" style="left:417px;top:222px;width:0;height:292px;border-left:1px dashed #c8c8c8"></div>
 <div class="fld" style="left:13px;top:225px;width:400px;height:25px;line-height:23px;padding-left:3px">Время<div class="dv" style="left:377px;background:#bdbdbd"></div><svg class="ico" style="left:385px;top:8px" width="8" height="8"><path d="M1 1l6 6M7 1L1 7" stroke="#444" stroke-width="1.2"/></svg></div>
 <div class="fld" style="left:423px;top:225px;width:400px;height:25px;line-height:23px;padding-left:3px;color:#b8b8b8">Найти оператор или функцию...<div class="dv" style="left:377px;background:#bdbdbd"></div><svg class="ico" style="left:385px;top:8px" width="8" height="8"><path d="M1 1l6 6M7 1L1 7" stroke="#444" stroke-width="1.2"/></svg></div>
 <div class="a" style="left:13px;top:259px;width:400px;height:255px;border:1px solid #a8a8a8"></div>
 <svg class="ico" style="left:24px;top:268px" width="12" height="12" viewBox="0 0 12 12"><path d="M5.5 6.2V0.5M5.5 6.2L10.9 4.4M5.5 6.2L8.8 10.8M5.5 6.2L2.2 10.8M5.5 6.2L0.1 4.4" stroke="#777" stroke-width="1.25" fill="none"/></svg>
 <div class="t" style="left:46px;top:267px;color:#333">Время решения задачи план</div>
 <svg class="ico" style="left:24px;top:297px" width="12" height="12" viewBox="0 0 12 12"><path d="M5.5 6.2V0.5M5.5 6.2L10.9 4.4M5.5 6.2L8.8 10.8M5.5 6.2L2.2 10.8M5.5 6.2L0.1 4.4" stroke="#777" stroke-width="1.25" fill="none"/></svg>
 <div class="t" style="left:46px;top:296px;color:#333">Время решения задачи факт</div>
 <svg class="ico" style="left:24px;top:326px" width="12" height="12" viewBox="0 0 12 12"><path d="M5.5 6.2V0.5M5.5 6.2L10.9 4.4M5.5 6.2L8.8 10.8M5.5 6.2L2.2 10.8M5.5 6.2L0.1 4.4" stroke="#777" stroke-width="1.25" fill="none"/></svg>
 <div class="t" style="left:46px;top:325px;color:#333">Выполнение.Время выполнения план(в часах)</div>
 <svg class="ico" style="left:24px;top:355px" width="12" height="12" viewBox="0 0 12 12"><path d="M5.5 6.2V0.5M5.5 6.2L10.9 4.4M5.5 6.2L8.8 10.8M5.5 6.2L2.2 10.8M5.5 6.2L0.1 4.4" stroke="#777" stroke-width="1.25" fill="none"/></svg>
 <div class="t" style="left:46px;top:354px;color:#333">Выполнение.Время выполнения факт (в часах)</div>
 <svg class="ico" style="left:24px;top:384px" width="12" height="12" viewBox="0 0 12 12"><path d="M5.5 6.2V0.5M5.5 6.2L10.9 4.4M5.5 6.2L8.8 10.8M5.5 6.2L2.2 10.8M5.5 6.2L0.1 4.4" stroke="#777" stroke-width="1.25" fill="none"/></svg>
 <div class="t" style="left:46px;top:383px;color:#333">Реакция.Время реакции план (в часах)</div>
 <div class="a" style="left:14px;top:405px;width:398px;height:29px;background:#808080"></div>
 <svg class="ico" style="left:24px;top:413px" width="12" height="12" viewBox="0 0 12 12"><path d="M5.5 6.2V0.5M5.5 6.2L10.9 4.4M5.5 6.2L8.8 10.8M5.5 6.2L2.2 10.8M5.5 6.2L0.1 4.4" stroke="#8e8e8e" stroke-width="1.25" fill="none"/></svg>
 <div class="t" style="left:46px;top:412px;color:#3a3a3a">Реакция.Время реакции факт (в часах)</div>
 <div class="a" style="left:423px;top:259px;width:400px;height:255px;border:1px solid #a8a8a8;overflow:hidden">
  <svg class="ico" style="left:10px;top:8px" width="11" height="11"><circle cx="5.5" cy="5.5" r="4.3" fill="#fff" stroke="#9a9a9a" stroke-width="0.9"/><path d="M3.2 5.5h4.6M5.5 3.2v4.6" stroke="#666" stroke-width="0.9"/></svg>
  <svg class="ico" style="left:28px;top:7px" width="15" height="15" viewBox="0 0 15 15" fill="none" stroke="#777" stroke-width="1.1"><path d="M0.6 13V1.3Q0.6 0.6 1.3 0.6H6L7.3 2.4H12.7Q13.4 2.4 13.4 3.1V13Q13.4 13.6 12.7 13.6H1.3Q0.6 13.6 0.6 13ZM0.6 5.6H13.4"/></svg>
  <div class="t" style="left:53px;top:7px;color:#333">Операторы</div>
  <svg class="ico" style="left:10px;top:37px" width="11" height="11"><circle cx="5.5" cy="5.5" r="4.3" fill="#fff" stroke="#9a9a9a" stroke-width="0.9"/><path d="M3.2 5.5h4.6M5.5 3.2v4.6" stroke="#666" stroke-width="0.9"/></svg>
  <svg class="ico" style="left:28px;top:36px" width="15" height="15" viewBox="0 0 15 15" fill="none" stroke="#777" stroke-width="1.1"><path d="M0.6 13V1.3Q0.6 0.6 1.3 0.6H6L7.3 2.4H12.7Q13.4 2.4 13.4 3.1V13Q13.4 13.6 12.7 13.6H1.3Q0.6 13.6 0.6 13ZM0.6 5.6H13.4"/></svg>
  <div class="t" style="left:53px;top:36px;color:#333">Операции над строками</div>
  <svg class="ico" style="left:10px;top:66px" width="11" height="11"><circle cx="5.5" cy="5.5" r="4.3" fill="#fff" stroke="#9a9a9a" stroke-width="0.9"/><path d="M3.2 5.5h4.6M5.5 3.2v4.6" stroke="#666" stroke-width="0.9"/></svg>
  <svg class="ico" style="left:28px;top:65px" width="14" height="13" viewBox="0 0 14 13" fill="none" stroke="#777" stroke-width="1.05"><path d="M6.6 1.2Q5.1 0.5 4.6 2L2.7 10.8Q2.2 12.3 0.7 12M2.6 4.8H6.2M7.6 5.6Q9 5 9.9 7.2L11.2 10.2Q12 12 13.4 11.3M7.9 11.6L13 5.6"/></svg>
  <div class="t" style="left:53px;top:65px;color:#333">Работа с датами</div>
  <svg class="ico" style="left:10px;top:95px" width="11" height="11"><circle cx="5.5" cy="5.5" r="4.3" fill="#fff" stroke="#9a9a9a" stroke-width="0.9"/><path d="M3.2 5.5h4.6M5.5 3.2v4.6" stroke="#666" stroke-width="0.9"/></svg>
  <svg class="ico" style="left:28px;top:94px" width="15" height="15" viewBox="0 0 15 15" fill="none" stroke="#777" stroke-width="1.1"><path d="M0.6 13V1.3Q0.6 0.6 1.3 0.6H6L7.3 2.4H12.7Q13.4 2.4 13.4 3.1V13Q13.4 13.6 12.7 13.6H1.3Q0.6 13.6 0.6 13ZM0.6 5.6H13.4"/></svg>
  <div class="t" style="left:53px;top:94px;color:#333">Операции сравнения</div>
  <svg class="ico" style="left:10px;top:124px" width="11" height="11"><circle cx="5.5" cy="5.5" r="4.3" fill="#fff" stroke="#9a9a9a" stroke-width="0.9"/><path d="M3.2 5.5h4.6M5.5 3.2v4.6" stroke="#666" stroke-width="0.9"/></svg>
  <svg class="ico" style="left:28px;top:123px" width="15" height="15" viewBox="0 0 15 15" fill="none" stroke="#777" stroke-width="1.1"><path d="M0.6 13V1.3Q0.6 0.6 1.3 0.6H6L7.3 2.4H12.7Q13.4 2.4 13.4 3.1V13Q13.4 13.6 12.7 13.6H1.3Q0.6 13.6 0.6 13ZM0.6 5.6H13.4"/></svg>
  <div class="t" style="left:53px;top:123px;color:#333">Логические операции</div>
  <svg class="ico" style="left:10px;top:153px" width="11" height="11"><circle cx="5.5" cy="5.5" r="4.3" fill="#fff" stroke="#9a9a9a" stroke-width="0.9"/><path d="M3.2 5.5h4.6" stroke="#666" stroke-width="0.9"/></svg>
  <svg class="ico" style="left:28px;top:152px" width="14" height="13" viewBox="0 0 14 13" fill="none" stroke="#777" stroke-width="1.05"><path d="M6.6 1.2Q5.1 0.5 4.6 2L2.7 10.8Q2.2 12.3 0.7 12M2.6 4.8H6.2M7.6 5.6Q9 5 9.9 7.2L11.2 10.2Q12 12 13.4 11.3M7.9 11.6L13 5.6"/></svg>
  <div class="t" style="left:53px;top:152px;color:#333">Агрегатные функции</div>
  <div class="a" style="left:70px;top:174px;width:94px;height:29px;background:#808080"></div>
  <div class="t" style="left:72px;top:181px;color:#333">КОЛИЧЕСТВО</div>
  <div class="t" style="left:72px;top:210px;color:#333">МАКСИМУМ</div>
  <div class="t" style="left:72px;top:239px;color:#333">МИНИМУМ</div>
  <div class="a" style="left:387px;top:23px;width:8px;height:206px;background:#a0a0a0;border-radius:4px"></div>
  <svg class="ico" style="left:388px;top:7px" width="7" height="4"><path d="M0 4h7L3.5 0z" fill="#c8c8c8"/></svg>
  <svg class="ico" style="left:388px;top:239px" width="7" height="4"><path d="M0 0h7L3.5 4z" fill="#555"/></svg>
 </div>
 <div class="t" style="left:13px;top:528px;color:#4d4d4d">Наименование:</div>
 <div class="fld" style="left:110px;top:523px;width:410px;height:25px;line-height:23px;padding-left:3px">Среднее время фактической реакции</div>
</div>
<!-- ANNOTATIONS -->
<div class="a" style="left:623px;top:973px;width:845px;height:4px;background:#e0312b;border-radius:2px"></div>
<svg class="a" style="left:0;top:0" width="1581" height="985" viewBox="0 0 1581 985">
 <g fill="#e0392f" stroke="none">
  <path d="M669 513.5 L971 513.5" stroke="#e0392f" stroke-width="3.5" stroke-linecap="round"/>
  <!-- arrow 1 -->
  <path d="M586 834 L624 680" stroke="#e0392f" stroke-width="3.6" stroke-linecap="round"/>
  <path d="M632.5 661.3 L638.7 691.2 L625.5 682.5 L611.6 684.3 Z"/>
  <!-- arrow 2 -->
  <path d="M1001 817 L876 567" stroke="#e0392f" stroke-width="3.6" stroke-linecap="round"/>
  <path d="M867.7 548 L892.3 566.5 L877.5 566 L867.4 578.5 Z"/>
  <!-- arrow 3 -->
  <path d="M1172 838.5 L1025 537" stroke="#e0392f" stroke-width="3.6" stroke-linecap="round"/>
  <path d="M1016.7 518 L1040.8 536.5 L1026 536.5 L1016.2 548.7 Z"/>
  <!-- arrow 4 -->
  <path d="M1239 860.7 L1225 860.7" stroke="#e0392f" stroke-width="3.6" stroke-linecap="round"/>
  <path d="M1208.3 860.7 L1233.6 848 L1227 860.7 L1234.7 874.9 Z"/>
 </g>
</svg>
<div class="a" style="left:259px;top:848px;width:392px;height:85px;background:rgba(34,34,34,.92);border-radius:3px"></div>
<div class="t" style="left:272px;top:855px;font-size:20.6px;line-height:24px;color:#9cc43e;-webkit-text-stroke:0.35px #9cc43e">Добавляем параметры для рассчета.<br>Введем в поле название параметра<br>для быстроты поиска</div>
<div class="a" style="left:1250px;top:807px;width:242px;height:86px;background:rgba(34,34,34,.92);border-radius:3px"></div>
<div class="t" style="left:1263px;top:814px;font-size:20.6px;line-height:24px;color:#9cc43e;-webkit-text-stroke:0.35px #9cc43e">добавим функцию<br>подсчета колчичества<br>параметра</div>






</body></html>
